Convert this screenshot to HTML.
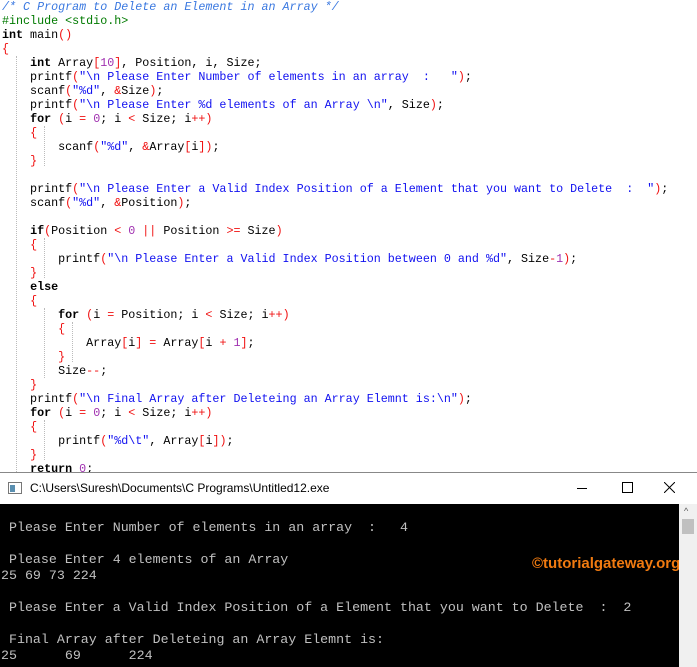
<!DOCTYPE html>
<html><head><meta charset="utf-8"><style>
body{margin:0;width:697px;height:666px;overflow:hidden;background:#fff;position:relative;font-family:"Liberation Mono",monospace}
pre{margin:0;position:absolute;left:2px;top:0;font:11.7px/14px "Liberation Mono",monospace;color:#000}
.c{color:#3a78e0;font-style:italic}.k{font-weight:bold}.s{color:#1010f0}.n{color:#a030b0}.o{color:#f01010}.p{color:#007a00}
.g{position:absolute;width:0;border-left:1px dotted #bbb}
#win{position:absolute;left:0;top:472px;width:697px;height:194px;border-top:1px solid #888;background:#000}
#tb{position:absolute;left:0;top:0;width:697px;height:31px;background:#fff;font:12px "Liberation Sans",sans-serif;color:#000}
#con{position:absolute;left:1px;top:31px;margin:0;font:13.3px/16px "Liberation Mono",monospace;color:#c0c0c0}
#sb{position:absolute;left:679px;top:31px;width:18px;height:163px;background:#f0f0f0}
</style></head><body>
<div class="g" style="left:16px;top:56px;height:416px"></div>
<div class="g" style="left:44px;top:126px;height:40px"></div>
<div class="g" style="left:44px;top:238px;height:40px"></div>
<div class="g" style="left:44px;top:308px;height:70px"></div>
<div class="g" style="left:72px;top:322px;height:40px"></div>
<div class="g" style="left:44px;top:420px;height:40px"></div>
<pre><span class="c">/* C Program to Delete an Element in an Array */</span>
<span class="p">#include &lt;stdio.h&gt;</span>
<span class="k">int</span> main<span class="o">()</span>
<span class="o">{</span>
    <span class="k">int</span> Array<span class="o">[</span><span class="n">10</span><span class="o">]</span>, Position, i, Size;
    printf<span class="o">(</span><span class="s">"\n Please Enter Number of elements in an array  :   "</span><span class="o">)</span>;
    scanf<span class="o">(</span><span class="s">"%d"</span>, <span class="o">&amp;</span>Size<span class="o">)</span>;
    printf<span class="o">(</span><span class="s">"\n Please Enter %d elements of an Array \n"</span>, Size<span class="o">)</span>;
    <span class="k">for</span> <span class="o">(</span>i <span class="o">=</span> <span class="n">0</span>; i <span class="o">&lt;</span> Size; i<span class="o">++)</span>
    <span class="o">{</span>
        scanf<span class="o">(</span><span class="s">"%d"</span>, <span class="o">&amp;</span>Array<span class="o">[</span>i<span class="o">])</span>;
    <span class="o">}</span>

    printf<span class="o">(</span><span class="s">"\n Please Enter a Valid Index Position of a Element that you want to Delete  :  "</span><span class="o">)</span>;
    scanf<span class="o">(</span><span class="s">"%d"</span>, <span class="o">&amp;</span>Position<span class="o">)</span>;

    <span class="k">if</span><span class="o">(</span>Position <span class="o">&lt;</span> <span class="n">0</span> <span class="o">||</span> Position <span class="o">&gt;=</span> Size<span class="o">)</span>
    <span class="o">{</span>
        printf<span class="o">(</span><span class="s">"\n Please Enter a Valid Index Position between 0 and %d"</span>, Size<span class="o">-</span><span class="n">1</span><span class="o">)</span>;
    <span class="o">}</span>
    <span class="k">else</span>
    <span class="o">{</span>
        <span class="k">for</span> <span class="o">(</span>i <span class="o">=</span> Position; i <span class="o">&lt;</span> Size; i<span class="o">++)</span>
        <span class="o">{</span>
            Array<span class="o">[</span>i<span class="o">]</span> <span class="o">=</span> Array<span class="o">[</span>i <span class="o">+</span> <span class="n">1</span><span class="o">]</span>;
        <span class="o">}</span>
        Size<span class="o">--</span>;
    <span class="o">}</span>
    printf<span class="o">(</span><span class="s">"\n Final Array after Deleteing an Array Elemnt is:\n"</span><span class="o">)</span>;
    <span class="k">for</span> <span class="o">(</span>i <span class="o">=</span> <span class="n">0</span>; i <span class="o">&lt;</span> Size; i<span class="o">++)</span>
    <span class="o">{</span>
        printf<span class="o">(</span><span class="s">"%d\t"</span>, Array<span class="o">[</span>i<span class="o">])</span>;
    <span class="o">}</span>
    <span class="k">return</span> <span class="n">0</span>;</pre>
<div id="win">
<div id="tb">
<svg style="position:absolute;left:8px;top:9px" width="14" height="12"><rect x="0.5" y="0.5" width="13" height="11" fill="#fff" stroke="#777"/><rect x="2" y="3" width="5" height="7" fill="#5a8fb0"/></svg>
<span style="position:absolute;left:30px;top:8px">C:\Users\Suresh\Documents\C Programs\Untitled12.exe</span>
<div style="position:absolute;left:577px;top:15px;width:10px;border-top:1px solid #000"></div>
<div style="position:absolute;left:622px;top:9px;width:9px;height:9px;border:1px solid #000"></div>
<svg style="position:absolute;left:664px;top:9px" width="11" height="11"><path d="M0 0L11 11M11 0L0 11" stroke="#000" stroke-width="1"/></svg>
</div>
<pre id="con">

 Please Enter Number of elements in an array  :   4

 Please Enter 4 elements of an Array
25 69 73 224

 Please Enter a Valid Index Position of a Element that you want to Delete  :  2

 Final Array after Deleteing an Array Elemnt is:
25      69      224</pre>
<div style="position:absolute;left:532px;top:82px;font:bold 15px 'Liberation Sans',sans-serif;color:#f07a10">©tutorialgateway.org</div>
<div id="sb"><div style="position:absolute;left:3px;top:15px;width:12px;height:15px;background:#c0c0c0"></div><div style="position:absolute;left:5px;top:2px;font:9px sans-serif;color:#555">^</div></div>
</div>
</body></html>
